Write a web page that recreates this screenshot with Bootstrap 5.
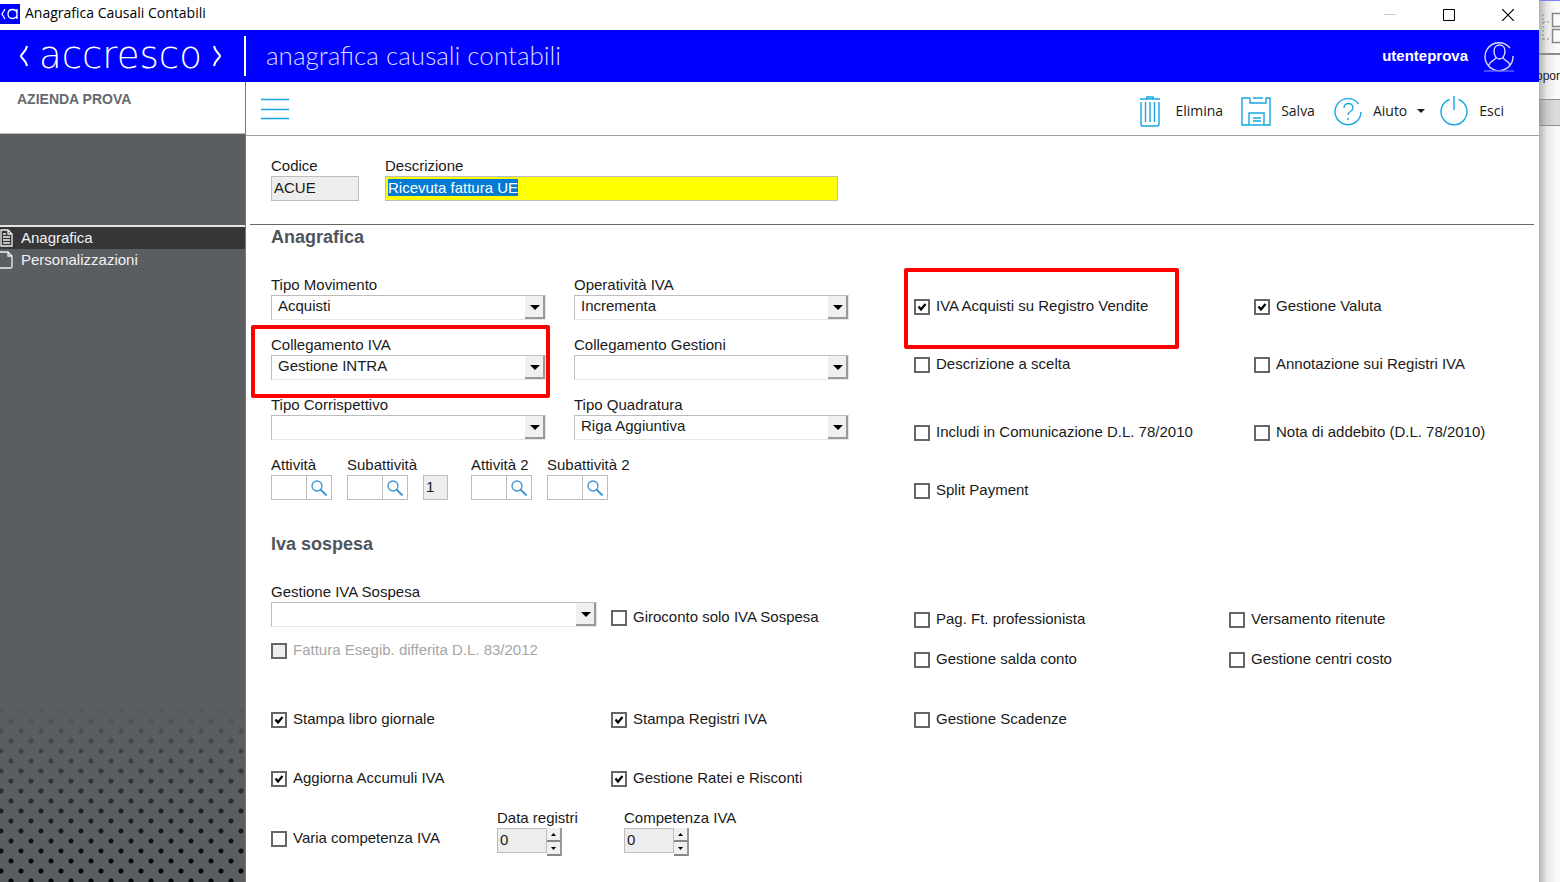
<!DOCTYPE html>
<html lang="it">
<head>
<meta charset="utf-8">
<meta name="viewport" content="width=device-width, initial-scale=1">
<title>Anagrafica Causali Contabili</title>
<link href="https://cdn.jsdelivr.net/npm/bootstrap@5.3.0/dist/css/bootstrap.min.css" rel="stylesheet">
<style>
  body { font: 15px/20px "Liberation Sans", Arial, sans-serif; color: #1a1a1a; background: #fff; }
  svg { display: block; flex: none; }
  .btn { --bs-btn-border-width: 0px; --bs-btn-padding-x: 0; --bs-btn-padding-y: 0; border-radius: 0; }

  /* window frame */
  .title-bar { height: 30px; font: 14px/20px "Open Sans", sans-serif; color: #000; gap: 5px; }
  .window-btns { gap: 47px; padding-right: 25px; }
  .brand-bar { height: 52px; background: #00f; color: #fff; }
  .brand-logo { width: 246px; height: 40px; border-right: 2px solid #fff; padding-left: 19px; gap: 10px; }
  .brand-name { font: 200 37px/40px "DejaVu Sans Light", "DejaVu Sans", sans-serif; }
  .page-title { font: 300 26px/30px Lato, sans-serif; color: #dcdcff; padding-bottom: 2px; }
  .user-name { font-weight: 700; }

  /* sidebar */
  .side { width: 246px; background: #5a5e61; border-right: 1px solid #77797b; }
  .company { height: 52px; background: #fff; color: #666a70; font: 700 14px/18px "Liberation Sans", Arial, sans-serif; padding: 8px 17px; border-bottom: 1px solid #bbb; }
  .side-menu { margin-top: 91px; border-top: 2px solid #e4e4e4; }
  .side-link { height: 22px; gap: 7px; color: #f2f2f2; text-decoration: none; }
  .side-link.active { background: #363638; }
  .dots { height: 180px;
    background-image: radial-gradient(circle, #08080b 2px, transparent 3px), radial-gradient(circle, #08080b 2px, transparent 3px);
    background-size: 20px 20px; background-position: -9px -1px, 1px 9px;
    -webkit-mask-image: linear-gradient(transparent, #000 90%); mask-image: linear-gradient(transparent, #000 90%); }

  /* toolbar */
  .tool-bar { height: 54px; border-bottom: 1px solid #a0a0a0; padding: 0 35px 0 14px; }
  .tools { gap: 18px; }
  .tool-btn { display: flex; align-items: center; gap: 10px; font: 14px/20px "Open Sans", sans-serif; color: #1a1a1a; }
  .tool-btn.dropdown-toggle { margin-right: -4px; }
  .tool-btn.dropdown-toggle::after { margin: 0; border-width: 4px 4px 0; }

  /* form */
  .form-area { padding: 20px 5px 0 25px; }
  .head-fields { gap: 26px; }
  .rule { margin: 23px 0 0 -21px; border-top: 1px solid #666; opacity: 1; }
  .section-title { font: 700 18px/24px "Liberation Sans", Arial, sans-serif; color: #4f555d; margin: 0 0 26px; }
  .field-label { display: block; height: 20px; white-space: nowrap; }
  .form-control, .form-select { height: 25px; border: 1px solid #bdbdbd; border-radius: 0; font-size: 15px; line-height: 19px; color: #1a1a1a; box-shadow: none; }
  .form-control { padding: 0 2px 2px; }
  .form-control:focus { border-color: #bdbdbd; box-shadow: none; }
  .form-select { padding: 0 28px 4px 6px; border-color: #bdbdbd #e6e6e6 #e6e6e6 #bdbdbd;
    background: #fff url("data:image/svg+xml,%3Csvg xmlns='http://www.w3.org/2000/svg' width='20' height='23'%3E%3Cpath d='M0 0h20v23H0z' fill='%23f0f0f0'/%3E%3Cpath d='M0 22h19V0' fill='none' stroke='%23999' stroke-width='2'/%3E%3Cpath d='M5 9h10l-5 5z'/%3E%3C/svg%3E") no-repeat right top; background-size: 20px 23px; }
  .readonly-box { background: #ededed; }
  .code-box { width: 88px; }
  .descr-box, .descr-box:focus { width: 453px; background: #ff0; color: #1a1a1a; }
  .descr-box::selection { background: rgba(0, 120, 215, .99); color: #fff; }
  .top-grid { display: grid; grid-template-columns: 643fr 620fr; align-items: start; }
  .selects { display: grid; grid-template-columns: 303fr 340fr; row-gap: 15px; }
  .select-md { width: 275px; }
  .select-lg { width: 326px; }
  .lookups { gap: 15px; grid-column: 1 / -1; }
  .lookup { width: 61px; }
  .lookup .btn { width: 25px; height: 25px; border: 1px solid #bdbdbd; border-left: 0; flex: none; display: grid; place-items: center; }
  .one-box { width: 25px; }
  .checks { display: grid; grid-template-columns: 340fr 280fr; row-gap: 38px; }
  .checks-low { display: grid; grid-template-columns: 315fr 305fr; row-gap: 20px; padding-top: 27px; }
  .checks-first { padding-top: 21px; }
  .checks-next { padding-top: 48px; }
  .iva-grid { display: grid; grid-template-columns: 340fr 303fr; row-gap: 13px; align-items: end; }
  .print-grid { display: grid; grid-template-columns: 340fr 303fr 620fr; row-gap: 39px; padding-top: 40px; }
  .tick { display: flex; align-items: center; gap: 6px; height: 20px; white-space: nowrap; }
  .tick .form-check-input { width: 16px; height: 16px; margin: 2px 0 0; border: 2px solid #666; border-radius: 0; box-shadow: none; flex: none; }
  .tick .form-check-input:checked { background: #fff url("data:image/svg+xml,%3Csvg xmlns='http://www.w3.org/2000/svg' viewBox='0 0 12 12'%3E%3Cpath d='M2.5 5.5 5 8.500 9.500 3' fill='none' stroke='%23000' stroke-width='2.200'/%3E%3C/svg%3E") center / 12px 12px no-repeat; }
  .tick .form-check-input:disabled, .tick .form-check-input:disabled ~ label { opacity: 1; }
  .tick .form-check-input:disabled { background: #ededed; }
  .tick .form-check-input:disabled ~ label { color: #a6a6a6; }
  .last-row { padding: 20px 0; }
  .varia { width: 226px; padding-top: 20px; }
  .spin-field { width: 127px; }
  .spin .form-control { width: 50px; appearance: textfield; -moz-appearance: textfield; }
  .spin input::-webkit-inner-spin-button { display: none; }
  .spin .btn { width: 15px; height: 14px; background: #f0f0f0; border-right: 2px solid #999; border-bottom: 2px solid #888; display: grid; place-items: center; }

  /* red callouts laid over the form */
  .callout { position: absolute; border: 4px solid #f00; border-radius: 2px; pointer-events: none; }
  .callout-link { inset: -10px -4px -18px -20px; }
  .callout-reg { left: -10px; top: -7px; width: 275px; height: 81px; }

  /* window behind */
  .behind { width: 21px; flex: none; background: linear-gradient(90deg, #b4b4b4, #e8e8e8 8px, #fafafa 17px); border-top: 1px solid #8080ff; }
  .behind-tools { height: 54px; border-bottom: 2px solid #8c8c8c; }
  .behind-tab { height: 44px; font: 12px/42px "Liberation Sans", Arial, sans-serif; text-indent: -3px; }
  .behind-band { height: 27px; border: solid #8c8c8c; border-width: 1px 0; background: rgba(0, 0, 0, .12); }
</style>
</head>
<body class="d-flex min-vh-100 overflow-hidden">
<div class="d-flex flex-column flex-fill">

  <header>
    <div class="title-bar d-flex align-items-center">
      <svg width="20" height="23" viewBox="0 0 20 23"><path d="M0 0h20v20H0z" fill="#00f"/><path d="M5 5 2 10l3 5M17 5v10M17 10c0-6-9-6-9 0s9 6 9 0" fill="none" stroke="#fff" stroke-width="1.300"/></svg>
      <span class="pb-1">Anagrafica Causali Contabili</span>
      <div class="window-btns d-flex ms-auto">
        <button class="btn" aria-label="Riduci"><svg width="12" height="12"><path d="M0 5.500h12" stroke="#ccc"/></svg></button>
        <button class="btn" aria-label="Ingrandisci"><svg width="12" height="12"><path d="M.5.500h11v11H.5z" fill="none" stroke="#000"/></svg></button>
        <button class="btn" aria-label="Chiudi"><svg width="12" height="12"><path d="m0 0 12 12M12 0 0 12" stroke="#000" stroke-width="1.200"/></svg></button>
      </div>
    </div>
    <div class="brand-bar d-flex align-items-center">
      <div class="brand-logo d-flex align-items-center">
        <svg width="10" height="24" viewBox="0 0 10 24" fill="none" stroke="#fff" stroke-width="2"><path d="M8 2C7 8 2 10 2 12s5 4 6 10"/></svg>
        <span class="brand-name">accresco</span>
        <svg width="10" height="24" viewBox="0 0 10 24" fill="none" stroke="#fff" stroke-width="2"><path d="M2 2c1 6 6 8 6 10s-5 4-6 10"/></svg>
      </div>
      <h1 class="page-title mb-0 ps-3 ms-1">anagrafica causali contabili</h1>
      <span class="user-name ms-auto">utenteprova</span>
      <svg class="ms-3 me-4" width="31" height="32" viewBox="0 0 31 32" fill="none" stroke="#dcdcff" stroke-width="1.400"><path d="M26 8A14 14 0 1 0 29 16M10 11c0-8 11-8 11 0 0 4-2 8-5.500 8S10 15 10 11zM12 17c0 4-6 3-7 8M19 17c0 4 6 3 7 8"/><path d="M0 31h30" stroke="#66f"/></svg>
    </div>
  </header>

  <div class="d-flex flex-fill">
    <aside class="side d-flex flex-column flex-shrink-0">
      <div class="company">AZIENDA PROVA</div>
      <nav class="side-menu">
        <a class="side-link active d-flex align-items-center" href="#anagrafica"><svg width="14" height="18" viewBox="0 0 14 18" fill="none" stroke="#eee" stroke-width="1.300"><path d="M1 1h7l4 4v12H1zM8 1v4h4M3 5h3M3 8h7M3 11h7M3 14h7"/></svg>Anagrafica</a>
        <a class="side-link d-flex align-items-center" href="#personalizzazioni"><svg width="14" height="18" viewBox="0 0 14 18" fill="none" stroke="#eee" stroke-width="1.300"><path d="M0 1h8l4 4v11l-1 1H0M8 1v4h4"/></svg>Personalizzazioni</a>
      </nav>
      <div class="dots mt-auto"></div>
    </aside>

    <main class="flex-fill">
      <div class="tool-bar d-flex align-items-center">
        <button class="btn me-auto" aria-label="Menu"><svg width="30" height="22" viewBox="0 0 30 22"><path d="M1 1.500h28M1 11.500h28M1 20.500h28" stroke="#16a5e0" stroke-width="1.400"/></svg></button>
        <div class="tools d-flex pt-1">
          <button class="btn tool-btn"><svg width="30" height="32" viewBox="0 0 30 32" fill="none" stroke="#16a5e0" stroke-width="1.400"><path d="M5 4h20M12 4V2h6v2M6 7v22q0 2 2 2h14q2 0 2-2V7M10.500 7v20M15 7v20M19.500 7v20"/></svg>Elimina</button>
          <button class="btn tool-btn"><svg width="30" height="32" viewBox="0 0 30 32" fill="none" stroke="#16a5e0" stroke-width="1.400"><path d="M9 3H1v27h28V3h-4v5H9V3M12 3h10M8 30V18h15v12M12 23h8M12 26h8"/></svg>Salva</button>
          <button class="btn tool-btn dropdown-toggle"><svg width="30" height="32" viewBox="0 0 30 32" fill="none" stroke="#16a5e0" stroke-width="1.400"><path d="M25.500 9A13 13 0 1 0 28 17M11 13c0-6 9-6 9 0 0 4-5 3-5 7M15 23v2"/></svg>Aiuto</button>
          <button class="btn tool-btn"><svg width="30" height="32" viewBox="0 0 30 32" fill="none" stroke="#16a5e0" stroke-width="1.400"><path d="M10.500 4.500a13 13 0 1 0 9 0M15 1v14"/></svg>Esci</button>
        </div>
      </div>

      <form class="form-area">
        <div class="head-fields d-flex">
          <div><label class="field-label" for="codice">Codice</label><input id="codice" class="form-control readonly-box code-box" value="ACUE" readonly></div>
          <div><label class="field-label" for="descr">Descrizione</label><input id="descr" class="form-control descr-box" value="Ricevuta fattura UE"></div>
        </div>
        <hr class="rule">

        <h2 class="section-title" id="anagrafica">Anagrafica</h2>
        <div class="top-grid">
          <div class="selects">
            <div><label class="field-label" for="mov">Tipo Movimento</label><select id="mov" class="form-select select-md"><option>Acquisti</option></select></div>
            <div><label class="field-label" for="oper">Operatività IVA</label><select id="oper" class="form-select select-md"><option>Incrementa</option></select></div>
            <div class="position-relative select-md"><label class="field-label" for="coll">Collegamento IVA</label><select id="coll" class="form-select select-md"><option>Gestione INTRA</option></select><span class="callout callout-link"></span></div>
            <div><label class="field-label" for="gest">Collegamento Gestioni</label><select id="gest" class="form-select select-md"><option></option></select></div>
            <div><label class="field-label" for="corr">Tipo Corrispettivo</label><select id="corr" class="form-select select-md"><option></option></select></div>
            <div><label class="field-label" for="quad">Tipo Quadratura</label><select id="quad" class="form-select select-md"><option>Riga Aggiuntiva</option></select></div>
            <div class="lookups d-flex align-items-end">
              <div class="lookup"><label class="field-label" for="att">Attività</label><div class="d-flex"><input id="att" class="form-control"><button type="button" class="btn" aria-label="Cerca attività"><svg width="18" height="18" viewBox="0 0 18 18" fill="none" stroke="#3c97d3" stroke-width="1.300"><circle cx="7" cy="7" r="5"/><path d="m10.500 10.500 6 6" stroke-width="2"/></svg></button></div></div>
              <div class="lookup"><label class="field-label" for="sub">Subattività</label><div class="d-flex"><input id="sub" class="form-control"><button type="button" class="btn" aria-label="Cerca subattività"><svg width="18" height="18" viewBox="0 0 18 18" fill="none" stroke="#3c97d3" stroke-width="1.300"><circle cx="7" cy="7" r="5"/><path d="m10.500 10.500 6 6" stroke-width="2"/></svg></button></div></div>
              <input class="form-control readonly-box one-box flex-shrink-0" value="1" aria-label="Livello" readonly>
              <div class="lookup ms-2"><label class="field-label" for="att2">Attività 2</label><div class="d-flex"><input id="att2" class="form-control"><button type="button" class="btn" aria-label="Cerca attività 2"><svg width="18" height="18" viewBox="0 0 18 18" fill="none" stroke="#3c97d3" stroke-width="1.300"><circle cx="7" cy="7" r="5"/><path d="m10.500 10.500 6 6" stroke-width="2"/></svg></button></div></div>
              <div class="lookup"><label class="field-label" for="sub2">Subattività 2</label><div class="d-flex"><input id="sub2" class="form-control"><button type="button" class="btn" aria-label="Cerca subattività 2"><svg width="18" height="18" viewBox="0 0 18 18" fill="none" stroke="#3c97d3" stroke-width="1.300"><circle cx="7" cy="7" r="5"/><path d="m10.500 10.500 6 6" stroke-width="2"/></svg></button></div></div>
            </div>
          </div>
          <div class="position-relative">
            <div class="checks checks-first">
              <div class="tick"><input class="form-check-input" type="checkbox" id="c1" checked><label for="c1">IVA Acquisti su Registro Vendite</label></div>
              <div class="tick"><input class="form-check-input" type="checkbox" id="c2" checked><label for="c2">Gestione Valuta</label></div>
              <div class="tick"><input class="form-check-input" type="checkbox" id="c3"><label for="c3">Descrizione a scelta</label></div>
              <div class="tick"><input class="form-check-input" type="checkbox" id="c4"><label for="c4">Annotazione sui Registri IVA</label></div>
            </div>
            <div class="checks checks-next">
              <div class="tick"><input class="form-check-input" type="checkbox" id="c5"><label for="c5">Includi in Comunicazione D.L. 78/2010</label></div>
              <div class="tick"><input class="form-check-input" type="checkbox" id="c6"><label for="c6">Nota di addebito (D.L. 78/2010)</label></div>
              <div class="tick"><input class="form-check-input" type="checkbox" id="c7"><label for="c7">Split Payment</label></div>
            </div>
            <span class="callout callout-reg"></span>
          </div>
        </div>

        <h2 class="section-title pt-2 mt-4">Iva sospesa</h2>
        <div class="top-grid">
          <div class="iva-grid">
            <div><label class="field-label" for="sosp">Gestione IVA Sospesa</label><select id="sosp" class="form-select select-lg"><option></option></select></div>
            <div class="tick"><input class="form-check-input" type="checkbox" id="c8"><label for="c8">Giroconto solo IVA Sospesa</label></div>
            <div class="tick"><input class="form-check-input" type="checkbox" id="c9" disabled><label for="c9">Fattura Esegib. differita D.L. 83/2012</label></div>
          </div>
          <div class="checks-low">
            <div class="tick"><input class="form-check-input" type="checkbox" id="c10"><label for="c10">Pag. Ft. professionista</label></div>
            <div class="tick"><input class="form-check-input" type="checkbox" id="c11"><label for="c11">Versamento ritenute</label></div>
            <div class="tick"><input class="form-check-input" type="checkbox" id="c12"><label for="c12">Gestione salda conto</label></div>
            <div class="tick"><input class="form-check-input" type="checkbox" id="c13"><label for="c13">Gestione centri costo</label></div>
          </div>
        </div>
        <div class="print-grid">
          <div class="tick"><input class="form-check-input" type="checkbox" id="c14" checked><label for="c14">Stampa libro giornale</label></div>
          <div class="tick"><input class="form-check-input" type="checkbox" id="c15" checked><label for="c15">Stampa Registri IVA</label></div>
          <div class="tick"><input class="form-check-input" type="checkbox" id="c16"><label for="c16">Gestione Scadenze</label></div>
          <div class="tick"><input class="form-check-input" type="checkbox" id="c17" checked><label for="c17">Aggiorna Accumuli IVA</label></div>
          <div class="tick"><input class="form-check-input" type="checkbox" id="c18" checked><label for="c18">Gestione Ratei e Risconti</label></div>
        </div>
        <div class="last-row d-flex">
          <div class="varia"><div class="tick"><input class="form-check-input" type="checkbox" id="c19"><label for="c19">Varia competenza IVA</label></div></div>
          <div class="spin-field"><label class="field-label" for="dreg">Data registri</label>
            <div class="spin d-flex"><input id="dreg" type="number" class="form-control readonly-box" value="0"><div class="d-flex flex-column"><button type="button" class="btn" aria-label="Aumenta"><svg width="5" height="3"><path d="M0 3h5L2.500 0z"/></svg></button><button type="button" class="btn" aria-label="Diminuisci"><svg width="5" height="3"><path d="M0 0h5L2.500 3z"/></svg></button></div></div>
          </div>
          <div class="spin-field"><label class="field-label" for="comp">Competenza IVA</label>
            <div class="spin d-flex"><input id="comp" type="number" class="form-control readonly-box" value="0"><div class="d-flex flex-column"><button type="button" class="btn" aria-label="Aumenta"><svg width="5" height="3"><path d="M0 3h5L2.500 0z"/></svg></button><button type="button" class="btn" aria-label="Diminuisci"><svg width="5" height="3"><path d="M0 0h5L2.500 3z"/></svg></button></div></div>
          </div>
        </div>
      </form>
    </main>
  </div>
</div>

<div class="behind overflow-hidden">
  <div class="behind-tools"><svg width="21" height="52" viewBox="0 0 21 52" fill="none" stroke="#888"><path d="M4 13v26M4 21h7M4 38h7" stroke-dasharray="2 2"/><path d="M25 12.500H13.500v13H25M25 28.500H13.500v13H25" stroke-width="1.500"/></svg></div>
  <div class="behind-tab">opor</div>
  <div class="behind-band"></div>
</div>

<script src="https://cdn.jsdelivr.net/npm/bootstrap@5.3.0/dist/js/bootstrap.bundle.min.js"></script>
<script>
  // the description opens focused with its text selected
  const descr = document.getElementById('descr');
  descr.focus();
  descr.select();
</script>
</body>
</html>
